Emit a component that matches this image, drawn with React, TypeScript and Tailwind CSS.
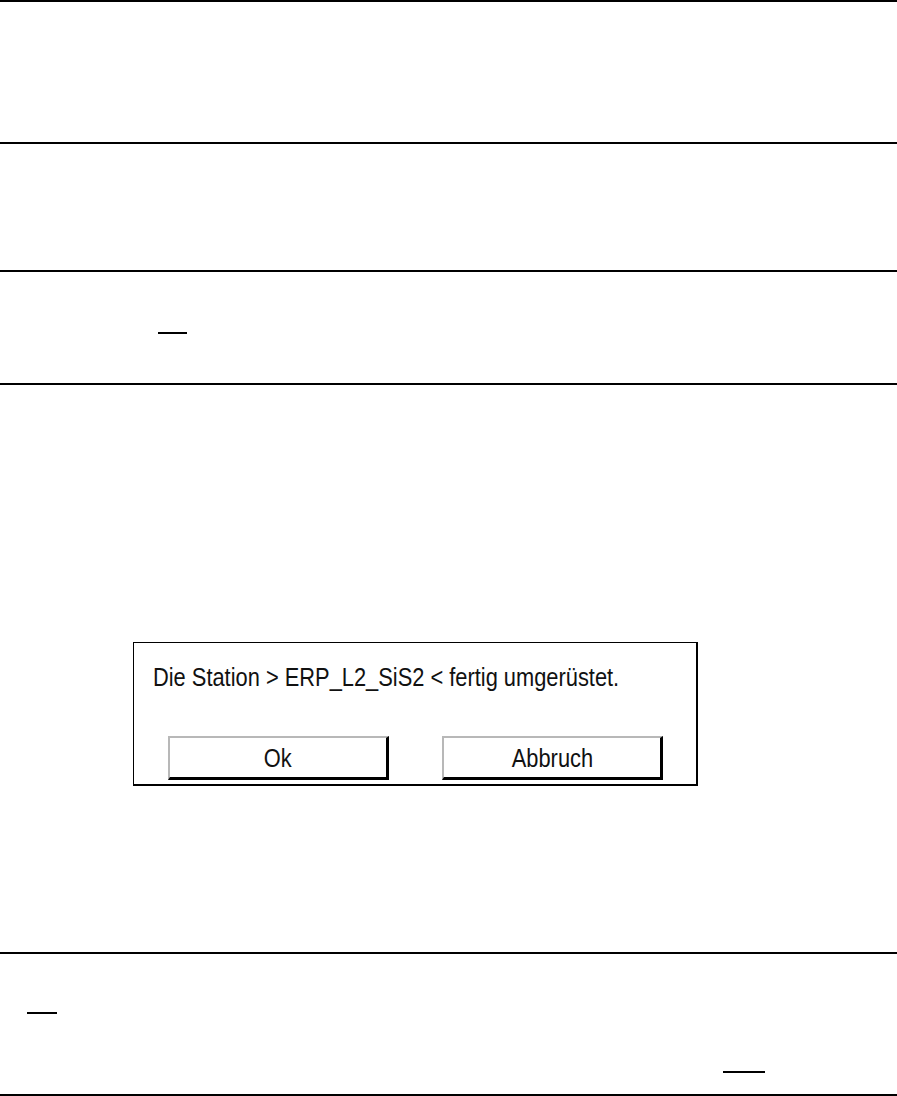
import React from 'react';

const sans = { fontFamily: '"Liberation Sans", Arial, sans-serif' };

function Rule({ className }: { className: string }) {
  return <div className={`h-[2px] bg-black ${className}`} />;
}

function DialogButton({ label }: { label: string }) {
  return (
    <button
      type="button"
      className="flex h-[44px] w-[221px] items-center justify-center border-t-2 border-l-2 border-r-[3px] border-b-[3px] border-t-[#b8b8b8] border-l-[#b8b8b8] border-r-black border-b-black bg-white text-[26px] leading-none text-[#111]"
    >
      {/* the X font is a narrow Helvetica, squeeze Liberation Sans to match */}
      <span className="inline-block origin-center scale-x-[0.84] whitespace-nowrap">{label}</span>
    </button>
  );
}

function Dialog() {
  return (
    <div
      className="ml-[133px] box-border h-[144px] w-[565px] border border-r-2 border-b-2 border-black bg-white"
      style={sans}
    >
      <div className="whitespace-nowrap pt-[19px] pl-[19px] text-[26px] leading-[30px] text-[#111]">
        <span className="inline-block origin-left scale-x-[0.84]">
          Die Station &gt; ERP_L2_SiS2 &lt; fertig umgerüstet.
        </span>
      </div>
      <div className="mt-[44px] flex gap-[53px] pl-[34px]">
        <DialogButton label="Ok" />
        <DialogButton label="Abbruch" />
      </div>
    </div>
  );
}

export default function App() {
  return (
    <div className="h-[1096px] w-[897px] overflow-hidden bg-white">
      {/* Section 1 */}
      <div className="box-border h-[142px] border-t-2 border-black" />

      {/* Section 2 */}
      <div className="box-border h-[128px] border-t-2 border-black" />

      {/* Section 3 - short underline */}
      <div className="box-border h-[113px] border-t-2 border-black pt-[60px]">
        <Rule className="ml-[158px] w-[29px]" />
      </div>

      {/* Section 4 - dialog */}
      <div className="box-border h-[569px] border-t-2 border-black pt-[257px]">
        <Dialog />
      </div>

      {/* Section 5 - two underlines */}
      <div className="box-border h-[144px] border-t-2 border-b-2 border-black pt-[58px]">
        <Rule className="ml-[27px] w-[30px]" />
        <Rule className="mt-[57px] ml-[723px] w-[42px]" />
      </div>
    </div>
  );
}
